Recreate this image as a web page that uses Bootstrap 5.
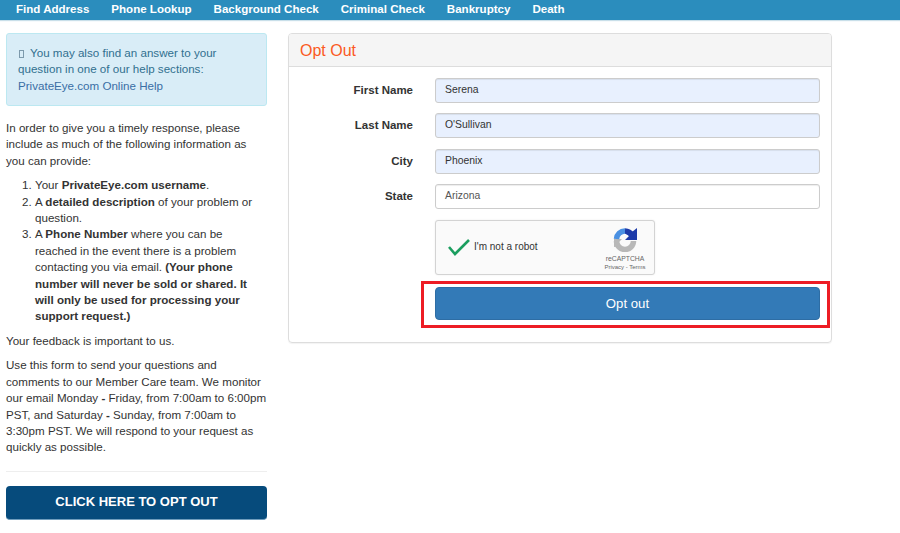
<!DOCTYPE html>
<html lang="en"><head><meta charset="utf-8"><title>Opt Out</title>
<link rel="stylesheet" href="https://cdn.jsdelivr.net/npm/bootstrap@5.3.0/dist/css/bootstrap.min.css">
<style>
body{font-family:"Liberation Sans",Arial,sans-serif;font-size:11.6px;line-height:16.4px;color:#333;background:#fff;overflow:hidden}
.topbar{background:#2b8dbd;height:20px;padding-left:16px;gap:22px;box-shadow:0 1px 1px #c9dfe9}
.topbar a{color:#fff;font-weight:700;font-size:11.55px;line-height:18px;text-decoration:none}
.shell{gap:21px;padding:13px 0 0 6px}
.side{width:261px;flex:none}
.helpbox{background:#d9edf7;border:1px solid #bce8f1;border-radius:3px;color:#31708f;padding:11px 11px 0;height:73px;margin-bottom:14px}
.helpbox a{color:#3a6ea5;text-decoration:none}
.tofu{display:inline-block;width:5px;height:8px;border:1px solid #7d9aac;margin:0 3px 0 1px;vertical-align:-1px}
.side p{margin:0 0 8px}
.side ol{margin:0 0 8px;padding:0 10px 0 29px}
.rule{border-top:1px solid #eee;margin:15px 0 14px}
.cta{display:block;background:#064b7c;color:#fff;font-weight:700;font-size:13px;text-align:center;line-height:32px;border-radius:4px;border-bottom:1px solid #6f9dbd;text-decoration:none;height:34px}
.panelbox{width:544px;flex:none;height:310px;border:1px solid #ddd;border-radius:4px;box-shadow:0 1px 1px rgba(0,0,0,.05)}
.panelhead{background:#f5f5f5;border-bottom:1px solid #ddd;height:33px;padding:0 11px;color:#fb5a24;font-size:16px;line-height:33px;border-radius:3px 3px 0 0}
.panelform{padding:11px 11px 0 0}
.frow{height:35.4px;gap:21px}
.frow label{width:125px;text-align:right;font-weight:700;font-size:11.5px;color:#333;flex:none;padding-right:1px}
.fakefield{width:385px;height:25px;font-size:10.4px;line-height:16px;padding:3px 9px;border:1px solid #ccc;border-radius:3px;color:#333;background:#e8f0fe;box-shadow:inset 0 1px 1px rgba(0,0,0,.075)}
.fakefield.plain{background:#fff;color:#555}
.capbox{margin:0 0 0 146px;width:220px;height:55px;background:#fafafa;border:1px solid #d3d3d3;border-radius:3px;box-shadow:0 0 2px rgba(0,0,0,.08);padding-left:11px;color:#333;font-size:10px}
.capbox svg.chk{width:24px;height:18px;margin-right:3px}
.capbrand{margin-left:auto;width:58px;text-align:center;color:#666;font-size:6.8px;line-height:9px;padding-top:5px}
.capbrand div{font-size:6px;line-height:9px}
.capbrand svg{display:block;margin:0 auto 2px}
.redframe{margin:6px 0 0 132px;width:409px;height:47px;border:3px solid #ed1c24;padding:3px 0 0 11px}
.optbtn{display:block;width:385px;height:33px;background:#337ab7;border:1px solid #2e6da4;border-radius:4px;color:#fff;font-size:13.2px;padding:0;line-height:31px;text-align:center}
</style></head>
<body>
<nav class="topbar d-flex align-items-start">
<a href="#">Find Address</a><a href="#">Phone Lookup</a><a href="#">Background Check</a><a href="#">Criminal Check</a><a href="#">Bankruptcy</a><a href="#">Death</a>
</nav>
<div class="shell d-flex align-items-start">
<aside class="side">
<div class="helpbox"><span class="tofu"></span> You may also find an answer to your question in one of our help sections:<br><a href="#">PrivateEye.com Online Help</a></div>
<p>In order to give you a timely response, please include as much of the following information as you can provide:</p>
<ol>
<li>Your <b>PrivateEye.com username</b>.</li>
<li>A <b>detailed description</b> of your problem or question.</li>
<li>A <b>Phone Number</b> where you can be reached in the event there is a problem contacting you via email. <b>(Your phone number will never be sold or shared. It will only be used for processing your support request.)</b></li>
</ol>
<p>Your feedback is important to us.</p>
<p>Use this form to send your questions and comments to our Member Care team. We monitor our email Monday <b>-</b> Friday, from 7:00am to 6:00pm PST, and Saturday <b>-</b> Sunday, from 7:00am to 3:30pm PST. We will respond to your request as quickly as possible.</p>
<div class="rule"></div>
<a class="cta" href="#">CLICK HERE TO OPT OUT</a>
</aside>
<main class="panelbox">
<div class="panelhead">Opt Out</div>
<div class="panelform">
<div class="frow d-flex align-items-start"><label class="pt-1">First Name</label><div class="fakefield">Serena</div></div>
<div class="frow d-flex align-items-start"><label class="pt-1">Last Name</label><div class="fakefield">O'Sullivan</div></div>
<div class="frow d-flex align-items-start"><label class="pt-1">City</label><div class="fakefield">Phoenix</div></div>
<div class="frow d-flex align-items-start"><label class="pt-1">State</label><div class="fakefield plain">Arizona</div></div>
<div class="capbox d-flex align-items-center">
<svg class="chk" viewBox="0 0 24 18"><path d="M2 9l6 7L22 2" fill="none" stroke="#1b9e5f" stroke-width="2.6"/></svg>
<span>I'm not a robot</span>
<div class="capbrand">
<svg width="24" height="25" viewBox="0 0 24 25"><path d="M3.5 14A8.5 8.5 0 0 0 20.5 14" fill="none" stroke="#b8b8b8" stroke-width="5.5"/><path d="M1 12h8l-3 3 1 4-6 1z" fill="#b8b8b8"/><path d="M3.5 12A8.5 8.5 0 0 1 12 4" fill="none" stroke="#4a90e2" stroke-width="5.5"/><path d="M12 4a8.5 8.5 0 0 1 7 4" fill="none" stroke="#1c3aa9" stroke-width="5.5"/><path d="M24 1v12H12l4-4-3-2 2-4 4 2z" fill="#1c3aa9"/></svg>
reCAPTCHA<div>Privacy - Terms</div></div>
</div>
<div class="redframe"><button class="optbtn" type="button">Opt out</button></div>
</div>
</main>
</div>
</body></html>
